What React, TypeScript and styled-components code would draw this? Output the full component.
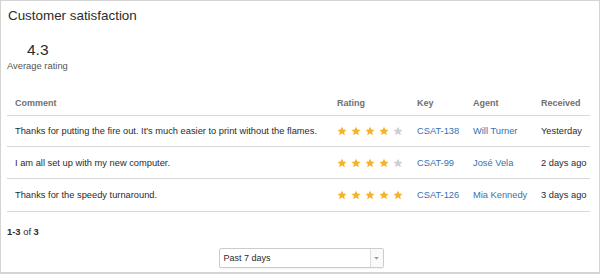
import React from 'react';
import styled, { createGlobalStyle } from 'styled-components';

const GlobalStyle = createGlobalStyle`
  html, body {
    margin: 0;
    padding: 0;
    background: #fff;
  }
  body {
    font-family: "Liberation Sans", Arial, sans-serif;
    color: #333;
  }
`;

// Styled components
const Frame = styled.div`
  width: 600px;
  height: 274px;
  box-sizing: border-box;
  border: 1px solid #d4d4d4;
  border-bottom-width: 2px;
  padding: 6px 6px 0 6px;
  display: flex;
  flex-direction: column;
  overflow: hidden;
`;

const Title = styled.h2`
  margin: 0 0 0 1px;
  font-size: 13.4px;
  font-weight: normal;
  line-height: 18px;
  color: #2b2b2b;
`;

const Summary = styled.div`
  display: flex;
  flex-direction: column;
  align-items: flex-start;
  margin-top: 17px;
`;

const Score = styled.div`
  font-size: 15.5px;
  line-height: 16px;
  margin-left: 20px;
  color: #2b2b2b;
`;

const ScoreLabel = styled.div`
  font-size: 9.4px;
  line-height: 12px;
  color: #555;
  margin-top: 2px;
`;

const Table = styled.div`
  margin-top: 19px;
  width: 583px;
  display: flex;
  flex-direction: column;
`;

const Row = styled.div<{ $head?: boolean; $height: number }>`
  display: grid;
  grid-template-columns: 322px 80px 56px 68px 1fr;
  align-items: center;
  height: ${(p) => p.$height}px;
  box-sizing: border-box;
  border-bottom: 1px solid #d8d8d8;
  font-size: ${(p) => (p.$head ? '9px' : '9.3px')};
  font-weight: ${(p) => (p.$head ? 'bold' : 'normal')};
  color: ${(p) => (p.$head ? '#707070' : '#2b2b2b')};
`;

const Cell = styled.div`
  padding-left: 8px;
  white-space: nowrap;
`;

const Link = styled.a`
  color: #3572b0;
  text-decoration: none;
  cursor: pointer;
`;

const Stars = styled.div`
  display: flex;
  gap: 4px;
  align-items: center;
`;

const Pager = styled.div`
  margin-top: 14px;
  line-height: 12px;
  font-size: 9.4px;
  color: #2b2b2b;

  b {
    font-weight: bold;
  }
`;

const SelectBar = styled.div`
  display: flex;
  justify-content: center;
  margin-top: 10px;
  padding-left: 2px;
`;

const Select = styled.div`
  width: 165px;
  height: 20px;
  box-sizing: border-box;
  border: 1px solid #ccc;
  border-radius: 2px;
  background: #fff;
  display: flex;
  align-items: stretch;
  font-size: 9px;
  color: #2b2b2b;
  box-shadow: 0 1px 1px rgba(0, 0, 0, 0.05);
`;

const SelectText = styled.div`
  flex: 1;
  display: flex;
  align-items: center;
  padding-left: 4px;
`;

const SelectArrow = styled.div`
  width: 12px;
  border-left: 1px solid #ddd;
  display: flex;
  align-items: center;
  justify-content: center;
  background: #fafafa;
`;

const Star = ({ on }: { on: boolean }) => (
  <svg width="10" height="10" viewBox="0 0 24 24">
    <path
      d="M12 1.5l3.2 7 7.6.8-5.7 5.1 1.6 7.5L12 18l-6.7 3.9 1.6-7.5L1.2 9.3l7.6-.8z"
      fill={on ? '#f6b22b' : '#cfcfcf'}
    />
  </svg>
);

const rows = [
  {
    comment: "Thanks for putting the fire out. It's much easier to print without the flames.",
    rating: 4,
    key: 'CSAT-138',
    agent: 'Will Turner',
    received: 'Yesterday',
    height: 31,
  },
  {
    comment: 'I am all set up with my new computer.',
    rating: 4,
    key: 'CSAT-99',
    agent: 'José Vela',
    received: '2 days ago',
    height: 32,
  },
  {
    comment: 'Thanks for the speedy turnaround.',
    rating: 5,
    key: 'CSAT-126',
    agent: 'Mia Kennedy',
    received: '3 days ago',
    height: 33,
  },
];

export default function App() {
  return (
    <>
      <GlobalStyle />
      <Frame>
        <Title>Customer satisfaction</Title>
        <Summary>
          <Score>4.3</Score>
          <ScoreLabel>Average rating</ScoreLabel>
        </Summary>

        <Table>
          <Row $head $height={25}>
            <Cell>Comment</Cell>
            <Cell>Rating</Cell>
            <Cell>Key</Cell>
            <Cell>Agent</Cell>
            <Cell>Received</Cell>
          </Row>
          {rows.map((r) => (
            <Row key={r.key} $height={r.height}>
              <Cell>{r.comment}</Cell>
              <Cell>
                <Stars>
                  {[1, 2, 3, 4, 5].map((n) => (
                    <Star key={n} on={n <= r.rating} />
                  ))}
                </Stars>
              </Cell>
              <Cell>
                <Link>{r.key}</Link>
              </Cell>
              <Cell>
                <Link>{r.agent}</Link>
              </Cell>
              <Cell>{r.received}</Cell>
            </Row>
          ))}
        </Table>

        <Pager>
          <b>1-3</b> of <b>3</b>
        </Pager>

        <SelectBar>
          <Select>
            <SelectText>Past 7 days</SelectText>
            <SelectArrow>
              <svg width="5" height="3" viewBox="0 0 6 4">
                <path d="M0 0h6L3 3.5z" fill="#999" />
              </svg>
            </SelectArrow>
          </Select>
        </SelectBar>
      </Frame>
    </>
  );
}
